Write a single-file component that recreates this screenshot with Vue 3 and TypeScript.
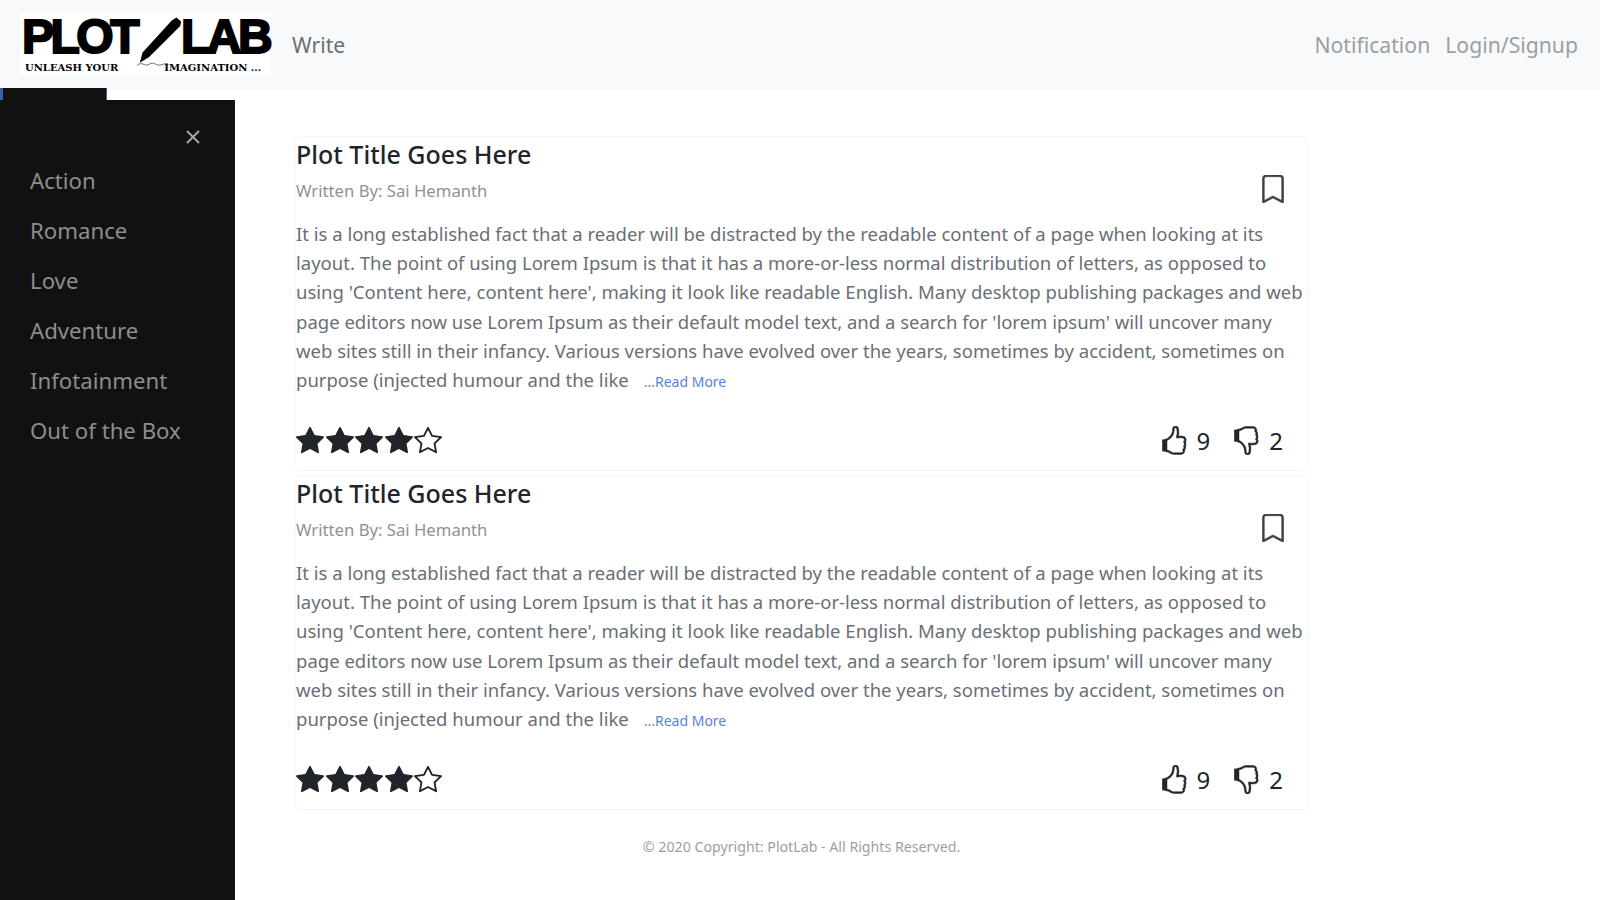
<template>
  <div class="page">
    <header class="navbar">
      <div class="logo">
        <div class="logo-main">
          <span>PLOT</span>
          <svg class="pen" viewBox="0 0 50 56" width="47" height="56">
            <path d="M43 1l5 4-1 5L14 43l-10 6 3-11L38 4z" fill="#000" />
            <path d="M1 52c5-5 8 1 12-1s5-2 9 0 8-2 12-1" fill="none" stroke="#666" stroke-width="1" />
          </svg>
          <span>LAB</span>
        </div>
        <div class="logo-tag">
          <span>UNLEASH YOUR</span>
          <span>IMAGINATION ...</span>
        </div>
      </div>
      <a class="nav-link write">Write</a>
      <nav class="nav-right">
        <a class="nav-link">Notification</a>
        <a class="nav-link">Login/Signup</a>
      </nav>
    </header>

    <div class="body">
      <aside class="sidebar">
        <div class="tab"></div>
        <div class="panel">
          <div class="close">
            <svg viewBox="0 0 16 16" width="16" height="16">
              <path d="M2 2l12 12M14 2L2 14" stroke="#a6a6a6" stroke-width="2" fill="none" />
            </svg>
          </div>
          <a v-for="genre in genres" :key="genre" class="genre">{{ genre }}</a>
        </div>
      </aside>

      <main class="main">
        <article v-for="plot in plots" :key="plot" class="card">
          <h3 class="title">Plot Title Goes Here</h3>
          <div class="meta">
            <span class="author">Written By: Sai Hemanth</span>
            <svg class="bookmark" viewBox="0 0 16 16" width="28" height="28">
              <path fill="#3a3f44" stroke="#3a3f44" stroke-width="0.35" fill-rule="evenodd" d="M2 2a2 2 0 0 1 2-2h8a2 2 0 0 1 2 2v13.5a.5.5 0 0 1-.777.416L8 13.101l-5.223 2.815A.5.5 0 0 1 2 15.5V2zm2-1a1 1 0 0 0-1 1v12.566l4.723-2.482a.5.5 0 0 1 .554 0L13 14.566V2a1 1 0 0 0-1-1H4z" />
            </svg>
          </div>
          <p class="text">
            <span v-for="line in lines.slice(0, 5)" :key="line" class="line">{{ line }}</span>
            <span class="line">{{ lines[5] }}<a class="more">...Read More</a></span>
          </p>
          <div class="actions">
            <div class="stars">
              <svg v-for="star in 5" :key="star" viewBox="0 0 16 16" width="28" height="28">
                <path fill="#212529" :d="star < 5 ? starFill : starOutline" />
              </svg>
            </div>
            <div class="votes">
              <svg class="thumb" viewBox="0 0 16 16" width="29" height="29">
                <path fill="#212529" stroke="#212529" stroke-width="0.25" :d="thumb" />
                <rect x="1.2" y="7.4" width="2.8" height="6.6" fill="#212529" />
              </svg>
              <span class="count">9</span>
              <svg class="thumb down" viewBox="0 0 16 16" width="29" height="29">
                <path fill="#212529" stroke="#212529" stroke-width="0.25" :d="thumb" />
                <rect x="1.2" y="7.4" width="2.8" height="6.6" fill="#212529" />
              </svg>
              <span class="count">2</span>
            </div>
          </div>
        </article>
        <footer class="footer">© 2020 Copyright: PlotLab - All Rights Reserved.</footer>
      </main>
    </div>
  </div>
</template>

<script setup lang="ts">
const genres: string[] = ['Action', 'Romance', 'Love', 'Adventure', 'Infotainment', 'Out of the Box']
const plots: number[] = [1, 2]

const lines: string[] = [
  'It is a long established fact that a reader will be distracted by the readable content of a page when looking at its',
  'layout. The point of using Lorem Ipsum is that it has a more-or-less normal distribution of letters, as opposed to',
  "using 'Content here, content here', making it look like readable English. Many desktop publishing packages and web",
  "page editors now use Lorem Ipsum as their default model text, and a search for 'lorem ipsum' will uncover many",
  'web sites still in their infancy. Various versions have evolved over the years, sometimes by accident, sometimes on',
  'purpose (injected humour and the like',
]

const starFill =
  'M3.612 15.443c-.386.198-.824-.149-.746-.592l.83-4.73L.173 6.765c-.329-.314-.158-.888.283-.95l4.898-.696L7.538.792c.197-.39.73-.39.927 0l2.184 4.327 4.898.696c.441.062.612.636.282.95l-3.522 3.356.83 4.73c.078.443-.36.79-.746.592L8 13.187l-4.389 2.256z'
const starOutline =
  'M2.866 14.85c-.078.444.36.791.746.593l4.39-2.256 4.389 2.256c.386.198.824-.149.746-.592l-.83-4.73 3.522-3.356c.33-.314.16-.888-.282-.95l-4.898-.696L8.465.792a.513.513 0 0 0-.927 0L5.354 5.12l-4.898.696c-.441.062-.612.636-.283.95l3.523 3.356-.83 4.73zm4.905-2.767-3.686 1.894.694-3.957a.565.565 0 0 0-.163-.505L1.71 6.745l4.052-.576a.525.525 0 0 0 .393-.288L8 2.223l1.847 3.658a.525.525 0 0 0 .393.288l4.052.575-2.906 2.77a.565.565 0 0 0-.163.506l.694 3.957-3.686-1.894a.503.503 0 0 0-.461 0z'
const thumb =
  'M8.864.046C7.908-.193 7.02.53 6.956 1.466c-.072 1.051-.23 2.016-.428 2.59-.125.36-.479 1.013-1.04 1.639-.557.623-1.282 1.178-2.131 1.41C2.685 7.288 2 7.87 2 8.72v4.001c0 .845.682 1.464 1.448 1.545 1.07.114 1.564.415 2.068.723l.048.03c.272.165.578.348.97.484.397.136.861.217 1.466.217h3.5c.937 0 1.599-.477 1.934-1.064a1.86 1.86 0 0 0 .254-.912c0-.152-.023-.312-.077-.464.201-.263.38-.578.488-.901.11-.33.172-.762.004-1.149.069-.13.12-.269.159-.403.077-.27.113-.568.113-.857 0-.288-.036-.585-.113-.856a2.144 2.144 0 0 0-.138-.362 1.9 1.9 0 0 0 .234-1.734c-.206-.592-.682-1.1-1.2-1.272-.847-.282-1.803-.276-2.516-.211a9.84 9.84 0 0 0-.443.05 9.365 9.365 0 0 0-.062-4.509A1.38 1.38 0 0 0 9.125.111L8.864.046zM11.5 14.721H8c-.51 0-.863-.069-1.14-.164-.281-.097-.506-.228-.776-.393l-.04-.024c-.555-.339-1.198-.731-2.49-.868-.333-.036-.554-.29-.554-.55V8.72c0-.254.226-.543.62-.65 1.095-.3 1.977-.996 2.614-1.708.635-.71 1.064-1.475 1.238-1.978.243-.7.407-1.768.482-2.85.025-.362.36-.594.667-.518l.262.066c.16.04.258.143.288.255a8.34 8.34 0 0 1-.145 4.725.5.5 0 0 0 .595.644l.003-.001.014-.003.058-.014a8.908 8.908 0 0 1 1.036-.157c.663-.06 1.457-.054 2.11.164.175.058.45.3.57.65.107.308.087.67-.266 1.022l-.353.353.353.354c.043.043.105.141.154.315.048.167.075.37.075.581 0 .212-.027.414-.075.582-.05.174-.111.272-.154.315l-.353.353.353.354c.047.047.109.177.005.488a2.224 2.224 0 0 1-.505.805l-.353.353.353.354c.006.005.041.05.041.17a.866.866 0 0 1-.121.416c-.165.288-.503.56-1.066.56z'
</script>

<style>
html,
body {
  margin: 0;
  overflow: hidden;
}
</style>

<style scoped>
.page {
  height: 900px;
  display: flex;
  flex-direction: column;
  background: #fff;
  font-family: "Noto Sans", "Open Sans", sans-serif;
  color: #212529;
}
.navbar {
  height: 90px;
  flex: none;
  display: flex;
  align-items: center;
  padding: 0 22px 2px 20px;
  background: #f8f9fa;
  box-sizing: border-box;
}
.logo {
  width: 250px;
  height: 62px;
  background: #fff;
  color: #000;
  font-weight: 700;
}
.logo-main {
  display: flex;
  align-items: flex-start;
  height: 46px;
  padding-left: 2px;
  font-size: 48px;
  line-height: 46px;
  font-family: "Liberation Sans", Arial, sans-serif;
  -webkit-text-stroke: 2px #000;
  letter-spacing: -3.5px;
}
.logo-main span {
  display: block;
  height: 55px;
  line-height: 55px;
  margin-top: -4px;
}
.pen {
  margin: 2px -2px 0 0;
  flex: none;
}
.logo-tag {
  display: flex;
  gap: 46px;
  padding: 3px 0 0 5px;
  font-size: 10px;
  line-height: 12px;
  font-family: "DejaVu Serif", serif;
  white-space: nowrap;
}
.nav-link {
  font-size: 21.2px;
  color: #7f8589;
}
.write {
  margin-left: 22px;
  color: #6b7074;
}
.nav-right {
  margin-left: auto;
  display: flex;
  gap: 15px;
}
.nav-right .nav-link {
  color: #9a9fa3;
}
.body {
  flex: 1;
  display: flex;
  min-height: 0;
}
.sidebar {
  width: 235px;
  flex: none;
  display: flex;
  flex-direction: column;
}
.tab {
  width: 107px;
  height: 12px;
  margin-top: -2px;
  flex: none;
  background: #111;
  border-left: 3px solid #3d5ea8;
  border-right: 1px solid #3d5ea8;
  box-sizing: border-box;
}
.panel {
  flex: 1;
  background: #111;
  padding-top: 29px;
}
.close {
  height: 27px;
  display: flex;
  justify-content: flex-end;
  padding-right: 34px;
}
.genre {
  display: block;
  height: 50px;
  padding-left: 30px;
  font-size: 22.2px;
  line-height: 50px;
  color: #8d8d8d;
}
.main {
  flex: 1;
  padding: 46px 0 0 60px;
  min-width: 0;
}
.card {
  width: 1013px;
  height: 335px;
  margin-bottom: 4px;
  border: 1px solid #f5f5f5;
  border-radius: 6px;
  box-sizing: border-box;
}
.title {
  margin: 0;
  font-size: 25px;
  line-height: 35px;
  font-weight: 500;
}
.meta {
  display: flex;
  justify-content: space-between;
  align-items: center;
  height: 36px;
  padding-right: 20px;
}
.author {
  font-size: 16.7px;
  color: #8e9397;
}
.bookmark {
  margin-bottom: 3px;
}
.text {
  margin: 11px 0 0;
  font-size: 18.5px;
  line-height: 29.2px;
  color: #696f75;
}
.line {
  display: block;
  white-space: nowrap;
}
.more {
  margin-left: 15px;
  font-size: 14px;
  color: #5a7fe0;
}
.actions {
  display: flex;
  justify-content: space-between;
  align-items: center;
  margin-top: 29px;
  padding-right: 24px;
}
.stars {
  display: flex;
  gap: 1.5px;
}
.votes {
  display: flex;
  align-items: center;
  margin-top: 1px;
}
.thumb {
  display: block;
}
.down {
  transform: scaleY(-1);
  margin-left: 22px;
}
.count {
  margin-left: 8px;
  font-size: 24px;
  line-height: 28px;
}
.footer {
  width: 1013px;
  margin-top: 27px;
  text-align: center;
  font-size: 14.2px;
  color: #9a9fa3;
}
</style>
